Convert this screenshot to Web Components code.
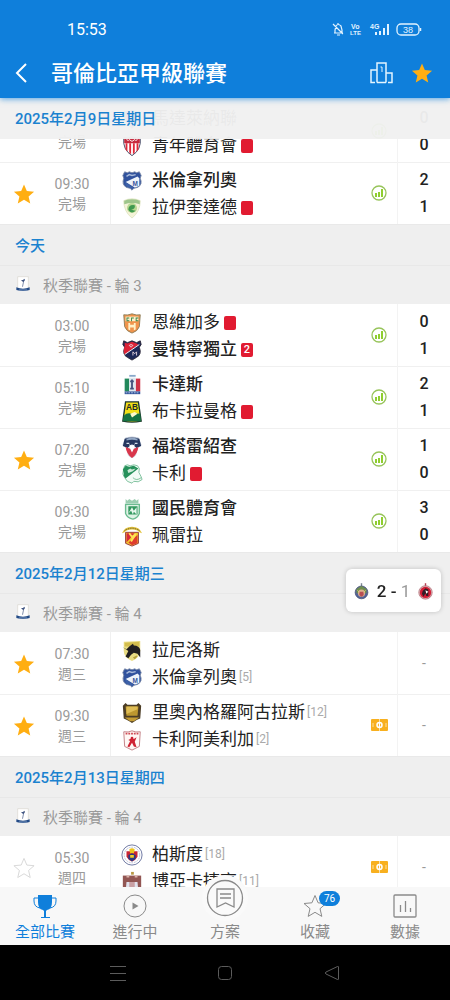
<!DOCTYPE html>
<html lang="zh-Hant">
<head>
<meta charset="utf-8">
<meta name="viewport" content="width=device-width, initial-scale=1">
<title>哥倫比亞甲級聯賽</title>
<style>
  :root {
    --brand: #0f7fdb;
    --link: #1b82cf;
    --star: #ffae12;
    --muted: #9a9a9a;
    --surface: #efefef;
    --line: #e9e9e9;
  }

  body {
    margin: 0;
    height: 100vh;
    display: flex;
    flex-direction: column;
    background: #fff;
    color: #222;
    font-family: Roboto, "Noto Sans CJK TC", sans-serif;
  }

  main {
    flex: 1;
    min-height: 0;
    overflow-y: auto;
    scrollbar-width: none;
  }
</style>
</head>
<body>
<app-header heading="哥倫比亞甲級聯賽" clock="15:53"></app-header>

<main>
  <day-section day="2025年2月9日星期日" pinned>
    <match-row status="完場" extra="stats" home="0" away="0">
      <team-line crest="magdalena">馬達萊納聯</team-line>
      <team-line crest="junior" red="1">青年體育會</team-line>
    </match-row>
    <match-row time="09:30" status="完場" star="on" extra="stats" home="2" away="1">
      <team-line crest="millonarios" winner>米倫拿列奧</team-line>
      <team-line crest="equidad" red="1">拉伊奎達德</team-line>
    </match-row>
  </day-section>

  <day-section day="今天" round="秋季聯賽 - 輪 3">
    <match-row time="03:00" status="完場" extra="stats" home="0" away="1">
      <team-line crest="envigado" red="1">恩維加多</team-line>
      <team-line crest="medellin" red="2" winner>曼特寧獨立</team-line>
    </match-row>
    <match-row time="05:10" status="完場" extra="stats" home="2" away="1">
      <team-line crest="caldas" winner>卡達斯</team-line>
      <team-line crest="bucaramanga" red="1">布卡拉曼格</team-line>
    </match-row>
    <match-row time="07:20" status="完場" star="on" extra="stats" home="1" away="0">
      <team-line crest="fortaleza" winner>福塔雷紹查</team-line>
      <team-line crest="cali" red="1">卡利</team-line>
    </match-row>
    <match-row time="09:30" status="完場" extra="stats" home="3" away="0">
      <team-line crest="nacional" winner>國民體育會</team-line>
      <team-line crest="pereira">珮雷拉</team-line>
    </match-row>
  </day-section>

  <day-section day="2025年2月12日星期三" round="秋季聯賽 - 輪 4">
    <match-row time="07:30" status="週三" star="on">
      <team-line crest="llaneros">拉尼洛斯</team-line>
      <team-line crest="millonarios" rank="5">米倫拿列奧</team-line>
    </match-row>
    <match-row time="09:30" status="週三" star="on" extra="lineup">
      <team-line crest="rionegro" rank="12">里奧內格羅阿古拉斯</team-line>
      <team-line crest="america" rank="2">卡利阿美利加</team-line>
    </match-row>
  </day-section>

  <day-section day="2025年2月13日星期四" round="秋季聯賽 - 輪 4">
    <match-row time="05:30" status="週四" star="off" extra="lineup">
      <team-line crest="pasto" rank="18">柏斯度</team-line>
      <team-line crest="boyaca" rank="11">博亞卡捷高</team-line>
    </match-row>
  </day-section>
</main>

<live-score home-crest="guadalajara" away-crest="tijuana" home="2" away="1"></live-score>

<tab-bar>
  <tab-item icon="trophy" active>全部比賽</tab-item>
  <tab-item icon="play">進行中</tab-item>
  <tab-item icon="plan" raised>方案</tab-item>
  <tab-item icon="star" badge="76">收藏</tab-item>
  <tab-item icon="chart">數據</tab-item>
</tab-bar>
<system-nav></system-nav>

<script>
const svg = (body, w = 24, h = 24, size = "") =>
  `<svg viewBox="0 0 ${w} ${h}" ${size} aria-hidden="true">${body}</svg>`;

const SHIELD = "M3 3Q7.5 4 12 2Q16.5 4 21 3Q22.5 16 12 22.5Q1.5 16 3 3Z";

/** Club crests, all on a 24 x 24 grid. */
const CRESTS = {
  magdalena: `<path d="${SHIELD}" fill="#2b4fa0"/><path d="M4 8h16v5H4z" fill="#d8283a"/>`,
  junior: `<path d="${SHIELD}" fill="#fff" stroke="#3b3f5c"/>
    <path d="M5 9v7l2 2V9zm4 0v10l2 2V9zm4 0v12l2-2V9zm4 0v9l2-2V9z" fill="#e02839"/>
    <path d="M3.5 3.5Q8 4 12 2.5Q16 4 20.5 3.5V9h-17z" fill="#c62a3e"/><path d="M6 5l2 1 1-1 3 2 3-2 1 1 2-1" stroke="#fff" fill="none"/>`,
  millonarios: `<path d="M4 2l3 1 2-1 3 1 3-1 2 1 3-1 2 4-1 3q3 7-3 10l-4 1-2 2-2-2-4-1Q.5 16 3 9L2 6z" fill="#30529d" stroke="#7787a6"/>
    <path d="M5 13L18 7l2 2v8q-2 2-5 2z" fill="#eef4fa"/><path d="M5 13l9 7q-2 0-2 1-2-2-5-2.5-3-1-2-5.5z" fill="#3d61a8"/>
    <path d="M6 7l3-2 3 1 4-1" fill="none" stroke="#a9bbda" stroke-width="1.5"/>
    <text x="12.5" y="17" font-family="Liberation Sans" font-weight="700" font-size="7" fill="#36569c">M</text>`,
  equidad: `<path d="M3 4q9-4 18 0 0 12-9 19Q3 16 3 4z" fill="#f4f3d8" stroke="#dfe5c3"/>
    <path d="M3.5 4q8.5-3 17 0v4q-8.5-3-17 0z" fill="#9dc58b"/><circle cx="12" cy="12" r="5.5" fill="#b8d792"/>
    <path d="M8 14q0-6 7-5 1 4-4 5l5 1q-5 4-8-1z" fill="#3f994e"/>`,
  envigado: `<path d="M3 3q4 1 9-1 5 2 9 1l-1 13q-2 5-8 7-6-2-8-7z" fill="#f0944c" stroke="#8a7d59"/>
    <path d="M5 5h14v5H5z" fill="#faf0cc"/><path d="M6 6h3v1H7v2h2v1H6zm5 0h3v1h-2v3h-1zm5 0h3v1h-2v2h2v1h-3z" fill="#388345"/>
    <path d="M8 12h2v2h4v-2h2v7l-2 1v-3h-4v3l-2-1z" fill="#fff2c9"/>`,
  medellin: `<path d="M3 2l4 2 5-2 5 2 4-2 1 4-2 3q3 8-3 11l-5 3-5-3Q1 17 4 9L2 6z" fill="#1d2858" stroke="#292434"/>
    <path d="M4 4l3 1 5-2 5 2 2 1L4 17q-2-4 0-9z" fill="#dc2236"/><path d="M4 17L20 6" stroke="#fff"/>
    <path d="M9 7l2-1 2 1-2 2zM13 18v-4l2 2 2-2v4" fill="none" stroke="#e8d7de"/>`,
  caldas: `<path d="M4 5h16v14H4z" fill="#fff"/><path d="M4 5h5v14H4z" fill="#22885b"/><path d="M16 5h5v14h-5z" fill="#cf3347"/>
    <path d="M9 4h7v15H9z" fill="#dfe8ef"/><path d="M12 6v10M10 8h4M10 16h4" stroke="#45517c" stroke-width="2"/><path d="M9 1h7v2H9z" fill="#89a8ca"/>
    <path d="M4 19h17v3H4z" fill="#305198"/><path d="M5 20.5h15" stroke="#b4c8e8" stroke-dasharray="2 1"/>`,
  bucaramanga: `<path d="M5 1h14l3 21q-10 2-20 0z" fill="#f2df16" stroke="#1d352c" stroke-width="1.5"/>
    <path d="M3 16q4-4 9-2 5-1 9 0l1 8H2z" fill="#167342"/><path d="M10 14l5-2 3 2-6 4z" fill="#fff9cc"/>
    <text x="12" y="10" text-anchor="middle" font-family="Liberation Sans" font-weight="700" font-size="9" fill="#1c2a28">AB</text>`,
  fortaleza: `<path d="M5 2q7-2 14 0l3 8-5 2-1 9-4 3-4-3-1-9-5-2z" fill="#edf1f7" stroke="#c6cfde"/>
    <path d="M4 3q8-3 16 0l2 8-5 2-5-4-5 4-5-2z" fill="#25365e"/><path d="M6 3q6-2 12 0v2q-6-2-12 0z" fill="#92a7c4"/>
    <path d="M5 12l5 2 2 4 2-4 5-2q-1 8-7 12-6-4-7-12z" fill="#d9364b"/><path d="M9 9l3 2 3-2-1 4-2 4-2-4z" fill="#fff"/>
    <path d="M6 8h3m6 0h3" stroke="#d6dfeb" stroke-width="1.5"/>`,
  cali: `<path d="M4 3l3-1 3 1 4-1 4 1 2 3q-2 4 2 9l1 3q-4 4-9 2l-2 2q-6-1-8-6l-2-4 1-6z" fill="#f2fbf5" stroke="#78bd99"/>
    <path d="M2 7l3-4 4 1 5-1 5 3L5 17q-3-3-2-6z" fill="#27915b"/><path d="M7 8l3-2 2 1 4-1-3 3-5 2z" fill="#cce9d7"/>
    <path d="M13 16q4 4 9 0" stroke="#77bd95" fill="none"/>`,
  nacional: `<path d="M5 1l2 2 2-2 3 2 3-2 2 2 2-2v5H5z" fill="#9bceb1"/><path d="M5 7h15v10q-2 5-7 6-6-1-8-6z" fill="#def2e5" stroke="#6bbb90" stroke-width="1.5"/>
    <path d="M8 9h10v9H8z" fill="#32985f"/><path d="M8 17l4-7 2 4 3-4v8l-3-3-1 3-2-4z" fill="#e8f8ee"/>`,
  pereira: `<path d="M1 9Q4 2 12 2t11 7l-3-1Q18 5 12 5T4 8z" fill="#e2c23b"/><path d="M4 6q8-5 16 0" fill="none" stroke="#4d4530" stroke-dasharray="1 1"/>
    <path d="M5 8h14v12l-7 3-7-3z" fill="#f1cb2c" stroke="#93303a"/><path d="M6 9h9L6 19z" fill="#d7283a"/><path d="M18 11v9l-6 2-4-3z" fill="#df3c2f"/>
    <path d="M9 9l3 4 4-3-5 8" fill="none" stroke="#ffe056" stroke-width="2"/>`,
  llaneros: `<path d="M3 2l18-1v11q-1 8-9 11-9-4-9-11z" fill="#e9dc83"/><path d="M4 3l16-1v5H4z" fill="#d3bd4e"/>
    <path d="M2 8l4 2 3-3 4-3 1 2q6 0 7 5v8l-3-4-4-1-3 2-3 4-3-2 3-6z" fill="#211f20"/><path d="M13 19l4-2 1 1-3 3z" fill="#b39f3e"/>`,
  rionegro: `<path d="M2 4l3-3 2 2h10l2-2 3 3-1 14q-4 1-6 3l-3 2-3-2q-3-2-6-3z" fill="#4c3d25"/>
    <path d="M5 5h14l-1 10H6z" fill="#bd972f"/><path d="M6 5h12v3L6 13z" fill="#dfbd55"/><path d="M4 17h16l-6 4h-4z" fill="#c39b34"/>`,
  america: `<path d="M3 3q5 1 9-1 4 2 9 1l-1 16-8 4-8-4z" fill="#fff8f5" stroke="#bf7b80"/><path d="M5 5h14" stroke="#cf4a54" stroke-width="2" stroke-dasharray="2 1"/>
    <circle cx="12" cy="10" r="1.5" fill="#cc2132"/><path d="M10 11h4l3-2-2 5 2 6-3-1-2-4-3 5-2-1 3-6-2-1z" fill="#cf2333"/>`,
  pasto: `<circle cx="12" cy="12" r="11" fill="#fff" stroke="#65709c"/><circle cx="12" cy="12" r="8.5" fill="none" stroke="#b6bad2" stroke-dasharray="2 1"/>
    <path d="M6 8h12v6q-2 4-6 5-4-1-6-5z" fill="#c82433"/><path d="M9 6q3-3 6 0l-1 4h-4z" fill="#edc31e"/><path d="M8 12l4-2 4 2v4l-4 3-4-3z" fill="#293a83"/><path d="M10 12h4v3h-4z" fill="#f1ce23"/>`,
  boyaca: `<path d="M2 5h20v18H2z" fill="#925653"/><path d="M6 5h3v2H6zm9 0h3v2h-3z" fill="#d9b1a8"/><path d="M11 1h3v3h-3z" fill="#b89843"/>
    <path d="M6 12h5v11H5zM13 12h5l1 11h-6z" fill="#e1e2ed"/><path d="M9 12h6v7H9z" fill="#c9a0a4"/>`,
  guadalajara: `<path d="M12 1v5" stroke="#7c8694" stroke-width="2"/><circle cx="12" cy="14" r="9" fill="#53619a" stroke="#44506f"/>
    <path d="M5 9l7-4 7 4v6H5z" fill="#6f8e4c"/><circle cx="12" cy="15" r="5" fill="#ddb08d"/><path d="M9 13h6v5l-3 2-3-2z" fill="#b84e53"/><path d="M6 11l3 3m9-3l-3 3" stroke="#e4d17a"/>`,
  tijuana: `<path d="M12 1v4" stroke="#b43d50" stroke-width="2"/><circle cx="12" cy="14" r="9.5" fill="#d9b8ba" stroke="#ae6872"/><circle cx="12" cy="14" r="8" fill="#d31d35"/>
    <path d="M8 12l4-4 4 2v9h-3l-1-4-3 5-2-4z" fill="#321e27"/><path d="M12 11l4 2-3 3z" fill="#fff"/>`,
  league: `<path d="M4 1h16v19H4z" fill="#fff" stroke="#d9d6cf"/><path d="M14 4l1 2-2 3-1 7h-1l1-7-3-3h3z" fill="#405582"/>
    <path d="M2 17q10 4 20 0v4q-10 3-20 0z" fill="#234b87"/><path d="M6 21h12" stroke="#a8bdd9"/>`,
};

const STAR = "M12 1.5l3.1 7.3 7.9.7-6 5.2 1.8 7.7L12 18.3l-6.8 4.1L7 14.7l-6-5.2 7.9-.7z";

const ICONS = {
  star: svg(`<path d="${STAR}"/>`),
  // match has statistics
  stats: svg(`<circle cx="8" cy="8" r="7" fill="none" stroke="#97c45a" stroke-width="1.3"/>
    <path d="M4 8h2v4H4zm3-1h2v5H7zm3-3h2v8h-2z" fill="#8fce2f"/>`, 16, 16, 'width="16" height="16"'),
  // probable lineups
  lineup: svg(`<rect width="17" height="12" rx="1" fill="#f8b01f"/><path d="M8.5 0v12M2 4v4M15 4v4" stroke="#fff" stroke-opacity=".6" fill="none"/>
    <circle cx="8.5" cy="6" r="2.5" fill="#f8b01f" stroke="#fff" stroke-width="1.5"/><path d="M8.5 4v4" stroke="#fff" stroke-width="1.2"/>`, 17, 12, 'width="17" height="12"'),
  trophy: svg(`<path d="M5 1h14v7q0 7-5 8l-1 1v6h4v1H8v-1h3v-6l-1-1q-5-1-5-8z" fill="currentColor"/>
    <path d="M5 4H1v3q0 6 6 7M19 4h4v3q0 6-6 7" fill="none" stroke="currentColor"/>`),
  play: svg(`<circle cx="12" cy="12" r="11" fill="none" stroke="currentColor"/><path d="M9.5 8.5l6 3.5-6 3.5z" fill="currentColor"/>`),
  plan: svg(`<circle cx="19" cy="19" r="17.5" fill="#fafafa" stroke="currentColor" stroke-width="1.3"/>
    <path d="M11 10h17v18l-8.5-4-8.5 4zM14 15h11M14 19h11" fill="none" stroke="currentColor" stroke-width="1.3"/>`, 38, 38),
  chart: svg(`<rect x="1" y="1" width="22" height="22" rx="1" fill="none" stroke="currentColor" stroke-width="1.3"/><path d="M7.5 11v7M12.5 7v11M17.5 14v4" stroke="currentColor" stroke-width="1.3"/>`),
  back: svg(`<path d="M11 1L2 10l9 9" fill="none" stroke="#fff" stroke-width="2"/>`, 14, 20, 'width="14" height="20"'),
  podium: svg(`<path d="M7 20.5V1h9v19.5M7 8H1v12.5h4M16 11h6v9.5h-4M7 20.5h9" fill="none" stroke="#e4f5ff" stroke-width="1.5"/><path d="M10.5 5H12v5" fill="none" stroke="#e4f5ff"/>`, 23, 22, 'width="23" height="22"'),
};

class AppHeader extends HTMLElement {
  connectedCallback() {
    this.attachShadow({ mode: "open" }).innerHTML = /* html */`
    <style>
      :host {
        display: block;
        position: relative;
        z-index: 2;
        background: var(--brand);
        color: #fff;
        box-shadow: 0 1px 6px #0f7fdbb0;
      }
      .status, .bar { display: flex; align-items: center; }
      .status {
        height: 48px;
        padding: 10px 28px 0 67px;
        box-sizing: border-box;
        font-size: 16px;
        justify-content: space-between;
      }
      .bar { height: 50px; padding: 0 17px 0 15px; }
      h1 { flex: 1; margin: 0 0 0 22px; padding-top: 2px; font-size: 22px; line-height: 30px; font-weight: 500; }
      button { display: flex; padding: 0; border: 0; background: none; }
      .fav { margin-left: 18px; fill: var(--star); }
      .fav svg { width: 22px; height: 22px; }
    </style>
    <div class="status">
      <time>${this.getAttribute("clock")}</time>
      <svg width="90" height="16" viewBox="0 0 90 16" fill="none" stroke="#e2f3ff" aria-hidden="true">
        <path d="M2 12h9M3 12V9l1-4q2-3 5 0l1 4v3M5 14h3M1 3l10 10M6 2v2" stroke-width="1.2"/>
        <path d="M44 11v3m4-4v4m4-7v7m4-11v11" stroke-width="2"/>
        <rect x="65" y="3" width="22" height="11" rx="4" stroke-width="1.3"/>
        <path d="M88.5 7v3" stroke-width="1.5"/>
        <g fill="#e2f3ff" stroke="none" font-family="Liberation Sans" font-weight="700">
          <text x="19" y="8" font-size="7">Vo</text>
          <text x="18" y="14" font-size="6">LTE</text>
          <text x="38" y="8" font-size="7">4G</text>
          <text x="71" y="12" font-size="9" font-weight="400">38</text>
        </g>
      </svg>
    </div>
    <div class="bar">
      <button aria-label="返回">${ICONS.back}</button>
      <h1>${this.getAttribute("heading")}</h1>
      <button aria-label="積分榜">${ICONS.podium}</button>
      <button class="fav" aria-label="收藏聯賽">${ICONS.star}</button>
    </div>`;
  }
}

/** One day of fixtures; a pinned day keeps its heading over the rows. */
class DaySection extends HTMLElement {
  connectedCallback() {
    const round = this.getAttribute("round");
    this.attachShadow({ mode: "open" }).innerHTML = /* html */`
    <style>
      :host { display: block; border-bottom: 1px solid var(--line); }
      h2, h3 { margin: 0; box-sizing: border-box; background: var(--surface); }
      h2 {
        height: 41px;
        padding: 0 15px;
        border-bottom: 1px solid #e8e8e8;
        font-size: 15px;
        line-height: 43px;
        font-weight: 500;
        color: var(--link);
      }
      h3 {
        display: flex;
        align-items: center;
        gap: 12px;
        height: 38px;
        padding: 0 15px 2px;
        font-size: 15px;
        font-weight: 400;
        color: var(--muted);
      }
      h3 svg { width: 16px; height: 18px; }
      :host([pinned]) h2 {
        position: relative;
        z-index: 1;
        background: #f0f0f0f6;
        border-color: transparent;
      }
      :host([pinned]) .rows { margin-top: -39px; }
    </style>
    <section>
      <h2>${this.getAttribute("day")}</h2>
      ${round ? `<h3>${svg(CRESTS.league)}<span>${round}</span></h3>` : ""}
      <div class="rows"><slot></slot></div>
    </section>`;
  }
}

class MatchRow extends HTMLElement {
  connectedCallback() {
    const star = this.getAttribute("star");
    const extra = this.getAttribute("extra");
    const score = this.hasAttribute("home")
      ? `<span>${this.getAttribute("home")}</span><span>${this.getAttribute("away")}</span>`
      : `<span class="none">-</span>`;

    this.attachShadow({ mode: "open" }).innerHTML = /* html */`
    <style>
      :host {
        display: grid;
        grid-template-columns: 48px 48px 14px 1fr 26px 53px;
        height: 62px;
        background: #fff;
      }
      :host(:not(:first-of-type)) { box-shadow: inset 0 1px #f0f0f0; }
      .star {
        display: flex;
        align-items: center;
        justify-content: center;
        padding: 2px 0 0;
        border: 0;
        background: none;
        fill: none;
      }
      .star svg { width: 22px; height: 22px; }
      .on { fill: var(--star); }
      .off { stroke: #d5d5d5; }
      .when {
        display: flex;
        flex-direction: column;
        justify-content: center;
        text-align: center;
        padding-top: 2px;
        font-size: 14px;
        line-height: 20px;
        color: var(--muted);
      }
      .when time { height: 20px; }
      .teams {
        grid-column: 4;
        padding: 5px 0 3px 10px;
        border-left: 1px solid #f0f0f0;
        min-width: 0;
      }
      .extra { display: flex; align-items: center; }
      .score {
        display: flex;
        flex-direction: column;
        justify-content: center;
        border-left: 1px solid #f3f3f3;
        text-align: center;
        font-size: 16px;
        line-height: 27px;
        font-weight: 500;
      }
      .none { color: var(--muted); font-size: 14px; font-weight: 400; }
    </style>
    ${star ? `<button class="star ${star}" aria-label="收藏比賽">${ICONS.star}</button>` : "<span></span>"}
    <div class="when"><time>${this.getAttribute("time") ?? ""}</time><span>${this.getAttribute("status")}</span></div>
    <div class="teams"><slot></slot></div>
    <div class="extra">${extra ? ICONS[extra] : ""}</div>
    <div class="score">${score}</div>`;
  }
}

class TeamLine extends HTMLElement {
  connectedCallback() {
    const rank = this.getAttribute("rank");
    const red = Number(this.getAttribute("red"));
    this.attachShadow({ mode: "open" }).innerHTML = /* html */`
    <style>
      :host {
        display: flex;
        align-items: center;
        height: 27px;
        font-size: 17px;
        line-height: 27px;
        white-space: nowrap;
      }
      :host([winner]) { font-weight: 500; }
      svg { width: 22px; height: 22px; margin-right: 9px; }
      .rank { margin-left: 2px; font-size: 12px; color: #aaa; }
      .red {
        width: 12px;
        height: 14px;
        margin-left: 4px;
        border-radius: 2px;
        background: #e11b31;
        color: #fff;
        text-align: center;
        font-size: 11px;
        line-height: 14px;
      }
    </style>
    ${svg(CRESTS[this.getAttribute("crest")])}
    <slot></slot>
    ${rank ? `<span class="rank">[${rank}]</span>` : ""}
    ${red ? `<span class="red">${red > 1 ? red : ""}</span>` : ""}`;
  }
}

/** Floating card with a followed live match. */
class LiveScore extends HTMLElement {
  connectedCallback() {
    this.attachShadow({ mode: "open" }).innerHTML = /* html */`
    <style>
      :host {
        position: fixed;
        right: 9px;
        bottom: 388px;
        z-index: 3;
        display: flex;
        align-items: center;
        justify-content: space-between;
        width: 95px;
        height: 43px;
        padding: 0 7px;
        box-sizing: border-box;
        border-radius: 6px;
        background: #fff;
        box-shadow: 0 0 5px #0003;
        font-size: 17px;
        font-weight: 500;
      }
      svg { width: 17px; height: 20px; }
      i { font-style: normal; font-weight: 400; color: var(--muted); }
    </style>
    ${svg(CRESTS[this.getAttribute("home-crest")])}
    <span>${this.getAttribute("home")} - <i>${this.getAttribute("away")}</i></span>
    ${svg(CRESTS[this.getAttribute("away-crest")])}`;
  }
}

class TabBar extends HTMLElement {
  connectedCallback() {
    this.attachShadow({ mode: "open" }).innerHTML = /* html */`
    <style>
      :host { display: block; position: relative; z-index: 2; background: #f8f8f8; }
      nav { display: flex; height: 58px; }
    </style>
    <nav><slot></slot></nav>`;
  }
}

class TabItem extends HTMLElement {
  connectedCallback() {
    const badge = this.getAttribute("badge");
    this.attachShadow({ mode: "open" }).innerHTML = /* html */`
    <style>
      :host { flex: 1; color: #8a8a8a; font-size: 15px; line-height: 20px; }
      :host([active]) { color: var(--brand); }
      a {
        display: flex;
        flex-direction: column;
        align-items: center;
        justify-content: flex-end;
        height: 100%;
        gap: 4px;
        padding-bottom: 3px;
        box-sizing: border-box;
        color: inherit;
        text-decoration: none;
      }
      .icon { position: relative; display: flex; }
      .icon svg { width: 24px; height: 24px; }
      :host([icon="star"]) svg { fill: none; stroke: currentColor; }
      /* the raised icon grows out over the top edge of the bar */
      :host([raised]) a { gap: 1px; }
      :host([raised]) svg {
        width: 38px;
        height: 38px;
        border: 4px solid #fafafa;
        border-radius: 50%;
        background: #fafafa;
      }
      .badge {
        position: absolute;
        left: 16px;
        top: -3px;
        padding: 0 5px;
        border-radius: 8px;
        background: var(--brand);
        color: #fff;
        font-size: 10px;
        line-height: 15px;
      }
    </style>
    <a href="#${this.getAttribute("icon")}">
      <span class="icon">${ICONS[this.getAttribute("icon")]}${badge ? `<span class="badge">${badge}</span>` : ""}</span>
      <slot></slot>
    </a>`;
  }
}

class SystemNav extends HTMLElement {
  connectedCallback() {
    this.attachShadow({ mode: "open" }).innerHTML = /* html */`
    <style>
      :host { display: block; background: #000; }
      div { display: flex; justify-content: space-between; align-items: center; height: 55px; width: 51%; margin: 0 auto; }
      button { display: flex; padding: 0; border: 0; background: none; }
      svg { width: 16px; height: 16px; fill: none; stroke: #5c5c5c; }
    </style>
    <div>
      <button aria-label="選單">${svg('<path d="M0 1.5h16M0 8.5h16M0 15.5h16"/>', 16, 16)}</button>
      <button aria-label="主畫面">${svg('<rect x="1.5" y="1.5" width="13" height="13" rx="3"/>', 16, 16)}</button>
      <button aria-label="上一頁">${svg('<path d="M14.5 2v12q0 1-1 .5L2 9Q.5 8 2 7l11.5-5.5q1-.5 1 .5z"/>', 16, 16)}</button>
    </div>`;
  }
}

customElements.define("app-header", AppHeader);
customElements.define("day-section", DaySection);
customElements.define("match-row", MatchRow);
customElements.define("team-line", TeamLine);
customElements.define("live-score", LiveScore);
customElements.define("tab-bar", TabBar);
customElements.define("tab-item", TabItem);
customElements.define("system-nav", SystemNav);
</script>
</body>
</html>
